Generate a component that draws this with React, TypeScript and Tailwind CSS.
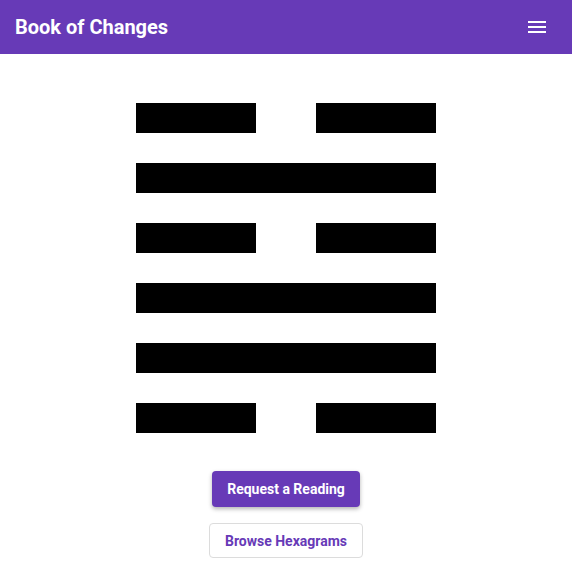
const lines: boolean[] = [false, true, false, true, true, false]; // true = solid (yang)

const HexLine = ({ solid }: { solid: boolean }) =>
  solid ? (
    <div className="h-[30px] w-[300px] bg-black" />
  ) : (
    <div className="flex h-[30px] w-[300px] justify-between">
      <div className="h-full w-[120px] bg-black" />
      <div className="h-full w-[120px] bg-black" />
    </div>
  );

export default function App() {
  return (
    <div className="min-h-screen bg-white font-['Roboto',sans-serif]">
      {/* Top bar */}
      <header className="flex h-[54px] items-center justify-between bg-[#673ab7] pl-[15px] pr-[26px] text-white">
        <h1 className="text-[20px] font-bold">Book of Changes</h1>
        <svg width="18" height="12" viewBox="0 0 18 12" fill="white">
          <rect x="0" y="0" width="18" height="2" />
          <rect x="0" y="5" width="18" height="2" />
          <rect x="0" y="10" width="18" height="2" />
        </svg>
      </header>

      {/* Hexagram */}
      <main className="flex flex-col items-center pt-[49px]">
        <div className="flex flex-col gap-[30px]">
          {lines.map((solid, i) => (
            <HexLine key={i} solid={solid} />
          ))}
        </div>

        <button className="mt-[38px] h-[36px] w-[148px] rounded-[4px] bg-[#673ab7] text-[14px] font-bold text-white shadow-[0_2px_4px_rgba(0,0,0,0.3)]">
          Request a Reading
        </button>
        <button className="mt-[16px] h-[35px] w-[154px] rounded-[4px] border border-[#dcdcdc] bg-white pt-px text-[14px] font-bold text-[#673ab7]">
          Browse Hexagrams
        </button>
      </main>
    </div>
  );
}
